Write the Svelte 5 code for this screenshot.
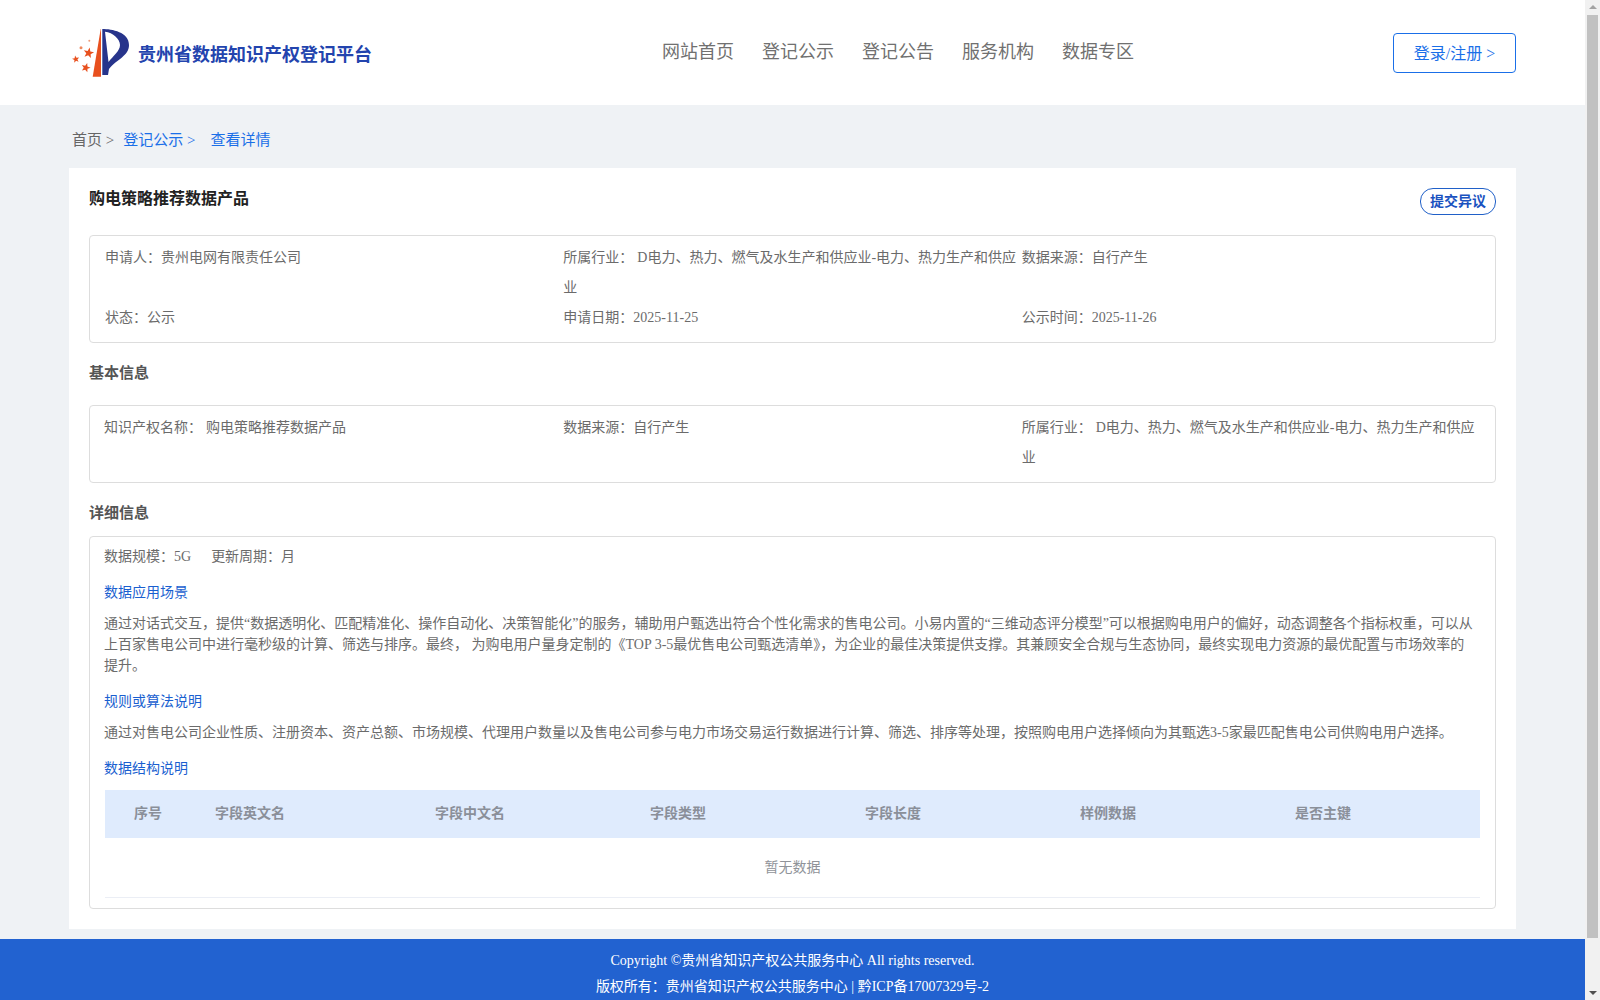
<script>
  const navItems = ['网站首页', '登记公示', '登记公告', '服务机构', '数据专区'];
  const columns = ['序号', '字段英文名', '字段中文名', '字段类型', '字段长度', '样例数据', '是否主键'];
  const industry = 'D电力、热力、燃气及水生产和供应业-电力、热力生产和供应业';

  // five pointed star around (cx, cy)
  function star(cx, cy, r, rot = 0) {
    const pts = [];
    for (let i = 0; i < 10; i++) {
      const rad = i % 2 ? r * 0.42 : r;
      const a = -Math.PI / 2 + rot + (i * Math.PI) / 5;
      pts.push(`${(cx + rad * Math.cos(a)).toFixed(2)},${(cy + rad * Math.sin(a)).toFixed(2)}`);
    }
    return pts.join(' ');
  }
</script>

<div class="screen">
  <div class="page">
    <header class="top">
      <div class="brand">
        <svg class="logo" viewBox="7 8 58 49" width="58" height="49" aria-hidden="true">
          <polygon points="35.7,9 36,9 36,56.7 27.7,56.7" fill="#e8501e" />
          <path
            fill="#27348b"
            fill-rule="evenodd"
            d="M37.3 9 C47 9 64 12 64 25 C64 36 52 39 44 49 L43 55 L37.3 55 Z M40 11.7 C48 12.5 55 19 55 25 C55 31 48 36 43.5 42 Z"
          />
          <polygon points={star(23.6, 33, 5.5, 0.2)} fill="#e8501e" />
          <polygon points={star(10.8, 39.3, 3.8, -0.2)} fill="#e8501e" />
          <polygon points={star(20.8, 47.7, 4.8, 0.3)} fill="#e8501e" />
          <circle cx="16" cy="27.7" r="1.5" fill="#ee8a60" />
          <circle cx="24.3" cy="20.7" r="1" fill="#ee9a78" />
        </svg>
        <span class="site-name">贵州省数据知识产权登记平台</span>
      </div>
      <nav class="nav">
        {#each navItems as item}
          <span>{item}</span>
        {/each}
      </nav>
      <button class="login">登录/注册 &gt;</button>
    </header>

    <div class="crumbs">
      <span class="home">首页 &gt;</span>
      <span class="link first">登记公示 &gt;</span>
      <span class="link second">查看详情</span>
    </div>

    <main class="card">
      <div class="title-row">
        <h1>购电策略推荐数据产品</h1>
        <button class="objection">提交异议</button>
      </div>

      <div class="box info first-box">
        <div>申请人：贵州电网有限责任公司</div>
        <div><span class="label">所属行业：</span>{industry}</div>
        <div>数据来源：自行产生</div>
        <div>状态：公示</div>
        <div>申请日期：2025-11-25</div>
        <div>公示时间：2025-11-26</div>
      </div>

      <h2 class="section">基本信息</h2>
      <div class="box info">
        <div class="lead"><span class="label">知识产权名称：</span>购电策略推荐数据产品</div>
        <div>数据来源：自行产生</div>
        <div><span class="label">所属行业：</span>{industry}</div>
      </div>

      <h2 class="section detail-head">详细信息</h2>
      <div class="box detail">
        <div class="meta"><span>数据规模：5G</span><span>更新周期：月</span></div>

        <h3 class="sub one">数据应用场景</h3>
        <p>通过对话式交互，提供“数据透明化、匹配精准化、操作自动化、决策智能化”的服务，辅助用户甄选出符合个性化需求的售电公司。小易内置的“三维动态评分模型”可以根据购电用户的偏好，动态调整各个指标权重，可以从上百家售电公司中进行毫秒级的计算、筛选与排序。最终， 为购电用户量身定制的《TOP 3-5最优售电公司甄选清单》，为企业的最佳决策提供支撑。其兼顾安全合规与生态协同，最终实现电力资源的最优配置与市场效率的<br />提升。</p>

        <h3 class="sub two">规则或算法说明</h3>
        <p>通过对售电公司企业性质、注册资本、资产总额、市场规模、代理用户数量以及售电公司参与电力市场交易运行数据进行计算、筛选、排序等处理，按照购电用户选择倾向为其甄选3-5家最匹配售电公司供购电用户选择。</p>

        <h3 class="sub three">数据结构说明</h3>
        <div class="table">
          <div class="thead">
            {#each columns as col}
              <div>{col}</div>
            {/each}
          </div>
          <div class="empty">暂无数据</div>
        </div>
      </div>
    </main>

    <footer class="foot">
      <div>Copyright ©贵州省知识产权公共服务中心 All rights reserved.</div>
      <div>版权所有：贵州省知识产权公共服务中心 | 黔ICP备17007329号-2</div>
    </footer>
  </div>

  <div class="scrollbar" aria-hidden="true">
    <span class="arrow up"></span>
    <span class="thumb"></span>
    <span class="arrow down"></span>
  </div>
</div>

<style>
  :global(body) {
    margin: 0;
    background: #eff2f5;
    font-family: "Liberation Serif", "Noto Sans CJK SC", serif;
  }

  .screen {
    display: flex;
    height: 1000px;
    overflow: hidden;
  }
  .page {
    flex: 1;
    min-width: 0;
    background: #eff2f5;
  }

  .top {
    height: 105px;
    background: #fff;
    display: flex;
    align-items: center;
    padding: 0 69px 0 72px;
  }
  .brand {
    display: flex;
    align-items: center;
    gap: 8px;
  }
  .logo { display: block; }
  .site-name {
    font-size: 18px;
    font-weight: 700;
    color: #2344ae;
    padding-top: 1px;
  }
  .nav {
    display: flex;
    gap: 28px;
    margin-left: 290px;
    font-size: 18px;
    color: #707070;
    padding-bottom: 6px;
  }
  .login {
    margin-left: auto;
    width: 123px;
    height: 40px;
    margin-top: 1px;
    border: 1px solid #1a6fe8;
    border-radius: 4px;
    background: #fff;
    color: #1a6fe8;
    font: inherit;
    font-size: 16px;
    padding: 0 0 3px;
  }

  .crumbs {
    padding: 25px 71px 18px 72px;
    font-size: 15px;
    line-height: 20px;
    color: #666;
    display: flex;
  }
  .link { color: #1a6fe8; }
  .first { margin-left: 9px; }
  .second { margin-left: 15px; }

  .card {
    margin: 0 69px;
    padding: 20px 20px 20px;
    background: #fff;
    font-size: 14px;
    color: #6b6b6b;
  }
  .title-row {
    display: flex;
    justify-content: space-between;
    align-items: flex-start;
  }
  h1 {
    margin: 0;
    font-size: 16px;
    line-height: 22px;
    font-weight: 700;
    color: #222;
  }
  .objection {
    width: 76px;
    height: 27px;
    padding: 0 0 3px;
    border: 1px solid #2060c8;
    border-radius: 13px;
    background: #fff;
    color: #1a52c0;
    font: inherit;
    font-size: 14px;
    font-weight: 700;
  }

  .box {
    border: 1px solid #ddd;
    border-radius: 4px;
  }
  .first-box { margin-top: 20px; }
  .info {
    display: grid;
    grid-template-columns: repeat(3, 1fr);
    padding: 7px 15px 9px;
    line-height: 30px;
  }
  .label { margin-right: 4px; }
  .lead { margin-left: -1px; }

  .section {
    margin: 19px 0 21px;
    font-size: 15px;
    line-height: 22px;
    font-weight: 700;
    color: #555;
  }
  .detail-head { margin-bottom: 12px; }

  .detail {
    padding: 10px 15px 10px;
  }
  .meta {
    display: flex;
    gap: 20px;
    line-height: 20px;
    margin-left: -1px;
  }
  .sub {
    margin: 16px 0 0 -1px;
    font-size: 14px;
    font-weight: 400;
    line-height: 20px;
    color: #1a5fd0;
  }
  p {
    margin: 10px 0 0 -1px;
    line-height: 21px;
  }

  .table { margin-top: 11px; }
  .thead {
    display: grid;
    grid-template-columns: 110px 220px 215px 215px 215px 215px 185px;
    height: 43px;
    padding-bottom: 5px;
    align-items: center;
    background: #dfebfd;
    font-weight: 700;
    color: #8a8f99;
  }
  .thead div:first-child { padding-left: 29px; }
  .empty {
    height: 59px;
    line-height: 59px;
    text-align: center;
    color: #909399;
    border-bottom: 1px solid #ebeef5;
  }

  .foot {
    margin-top: 10px;
    padding-top: 9px;
    height: 60px;
    background: #2262d0;
    color: #fff;
    font-size: 14px;
    line-height: 26px;
    text-align: center;
  }

  .scrollbar {
    width: 15px;
    flex-shrink: 0;
    background: #f1f1f1;
    display: flex;
    flex-direction: column;
    align-items: center;
  }
  .thumb {
    width: 11px;
    height: 923px;
    background: #c1c1c1;
  }
  .arrow {
    flex: 1;
    position: relative;
    width: 100%;
  }
  .arrow::after {
    content: "";
    position: absolute;
    left: 3.5px;
    border-left: 4px solid transparent;
    border-right: 4px solid transparent;
  }
  .up { flex: 0 0 15px; }
  .up::after {
    top: 5px;
    border-bottom: 4px solid #a3a3a3;
  }
  .down::after {
    bottom: 5px;
    border-top: 4px solid #505050;
  }
</style>
